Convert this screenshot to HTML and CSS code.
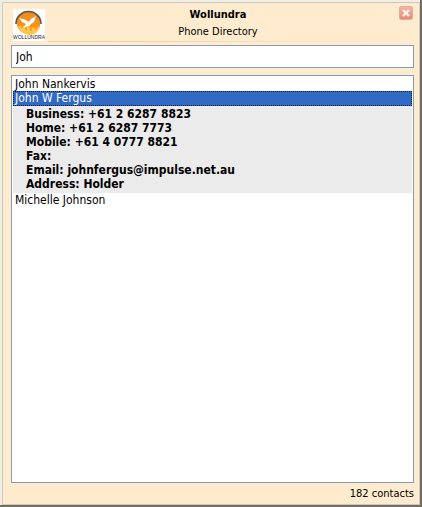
FILE: index.html
```
<!DOCTYPE html>
<html lang="en">
<head>
<meta charset="utf-8">
<title>Wollundra Phone Directory</title>
<link rel="stylesheet" href="styles.css">
</head>
<body>
<main class="window">
  <div class="panel">
    <header class="header">
      <svg class="logo" viewBox="0 0 32 32" role="img" aria-label="Wollundra">
        <defs>
          <linearGradient id="sun" x1="0" y1="0" x2="0" y2="1">
            <stop offset="0" stop-color="#ef8a1c"/>
            <stop offset=".6" stop-color="#f6941f"/>
            <stop offset="1" stop-color="#fdb03a"/>
          </linearGradient>
        </defs>
        <rect width="32" height="32" fill="#fff"/>
        <circle cx="15.500" cy="13.500" r="11.800" fill="url(#sun)"/>
        <path d="M5 17h3v2h2v-2h2v4h2v-3h3v4h2v-3h3v2h2v-3h3q-3 8-11 8Q8 25 5 17Z" fill="#ffc64a"/>
        <path d="M3 15A12.500 12.500 0 0 1 28 15" fill="none" stroke="#5b534d" stroke-width="1.600"/>
        <path d="M6 9l7 2 3 2 2-3 5-3-2 6-3 2-2 2-6 2 3-4-4-2Z" fill="#fff"/>
        <text class="logo-text" x="16" y="30" text-anchor="middle">WOLLUNDRA</text>
      </svg>
      <div class="titles">
        <h1 class="title">Wollundra</h1>
        <p class="subtitle">Phone Directory</p>
      </div>
      <button class="close" type="button" aria-label="Close">
        <svg class="close-icon" viewBox="0 0 8 8" aria-hidden="true"><path d="M1 1l6 6M7 1L1 7" stroke="#fff2e4" stroke-width="2.400"/></svg>
      </button>
    </header>
    <input class="search" type="text" value="Joh" aria-label="Search contacts">
    <ul class="contacts">
      <li><button class="contact" type="button">John Nankervis</button></li>
      <li>
        <button class="contact selected" type="button" aria-expanded="true">John W Fergus</button>
        <ul class="details">
          <li>Business: +61 2 6287 8823</li>
          <li>Home: +61 2 6287 7773</li>
          <li>Mobile: +61 4 0777 8821</li>
          <li>Fax:</li>
          <li>Email: johnfergus@impulse.net.au</li>
          <li>Address: Holder</li>
        </ul>
      </li>
      <li><button class="contact" type="button">Michelle Johnson</button></li>
    </ul>
    <footer class="status">182 contacts</footer>
  </div>
</main>
</body>
</html>
```
FILE: styles.css
```
* {
  box-sizing: border-box;
}

body {
  margin: 0;
  font-family: "DejaVu Sans Condensed", "Noto Sans", sans-serif;
  font-size: 12px;
  color: #000;
}

h1, p, ul {
  margin: 0;
  padding: 0;
}

ul {
  list-style: none;
}

button, input {
  font: inherit;
}

.window {
  min-height: 100vh;
  display: flex;
  background: #f1efe2;
  padding: 2px 0 0 2px;
  border-right: 2px solid #716f64;
  border-bottom: 2px solid #716f64;
}

.panel {
  flex: 1;
  display: flex;
  flex-direction: column;
  padding: 0 5px 0 8px;
  background: #ffebcd;
  border: 1px solid #c8c8c8;
}

.header {
  display: grid;
  grid-template-columns: 32px 1fr 14px;
  column-gap: 3px;
  padding: 3px 1px 3px 2px;
  height: 42px;
}

.logo {
  width: 32px;
  height: 32px;
  margin-top: 3px;
}

.logo-text {
  font-family: "Liberation Sans", sans-serif;
  font-size: 5px;
  fill: #222;
}

.titles {
  display: flex;
  flex-direction: column;
  align-items: center;
  padding-right: 8px;
  border-bottom: 1px solid;
  border-image: linear-gradient(to right, #f3cf8c, #f5d59b 30%, #ffebcd 95%) 1;
}

.title {
  font-size: 11px;
  line-height: 17px;
}

.subtitle {
  font-size: 11px;
  line-height: 17px;
}

.close {
  width: 14px;
  height: 14px;
  padding: 2px;
  border: 1px solid #eaa99a;
  border-radius: 2px;
  background: linear-gradient(#f0b5a5, #e88a7c);
}

.close-icon {
  display: block;
  width: 8px;
  height: 8px;
}

.search {
  width: 100%;
  height: 23px;
  padding: 0 4px;
  border: 1px solid #7f9db9;
  background: #fff;
  color: #000;
}

.contacts {
  flex: 1;
  margin-top: 7px;
  padding: 1px;
  border: 1px solid #7f9db9;
  background: #fff;
}

.contact {
  display: block;
  width: 100%;
  padding: 0 2px;
  border: 0;
  background: none;
  color: #000;
  line-height: 14px;
  text-align: left;
}

.selected {
  padding: 0 1px;
  border: 1px dotted #0c1a33;
  background: #316ac5;
  color: #fff;
  line-height: 13px;
}

.details {
  padding: 1px 13px 2px;
  background: #ebebeb;
  font-weight: bold;
  line-height: 14px;
}

.status {
  height: 21px;
  padding-top: 2px;
  font-size: 11px;
  line-height: 18px;
  text-align: right;
}
```
